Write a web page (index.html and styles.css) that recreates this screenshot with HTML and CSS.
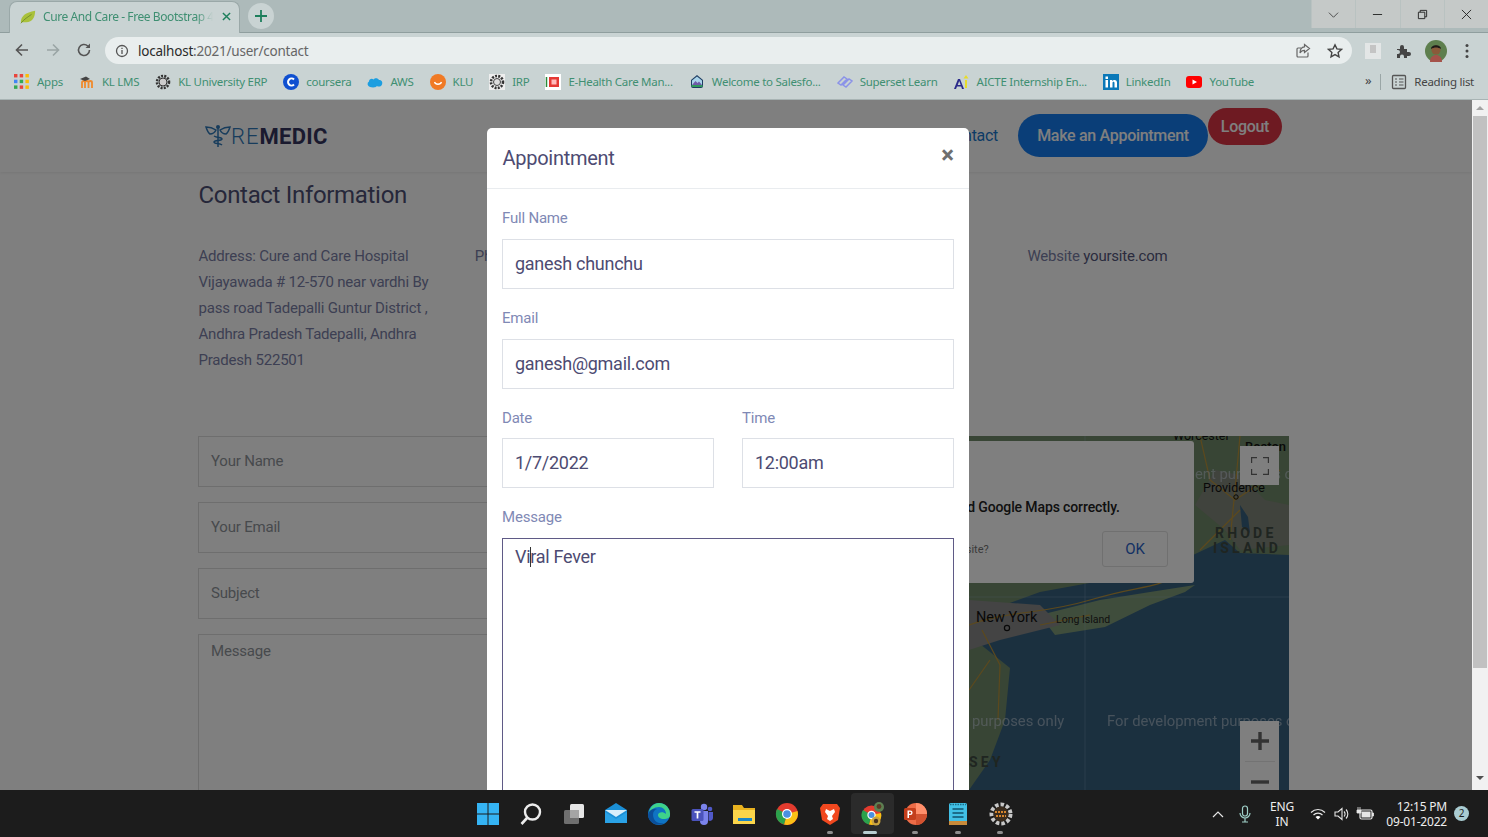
FILE: index.html
```html
<!DOCTYPE html>
<html lang="en">
<head>
<meta charset="utf-8">
<title>Cure And Care - Free Bootstrap 4</title>
<link rel="stylesheet" href="styles.css">
</head>
<body>
<div class="browser">
  <div class="tabstrip">
    <div class="tab">
      <svg class="ico16" viewBox="0 0 18 16"><path d="M1 14C1 7 6 3 17 1c0 7-3 13-10 13-2 0-4 0-6 0z" fill="#a9c13b"/><path d="M1 15C5 10 9 8 13 5" stroke="#6d8a2a" fill="none"/></svg>
      <span class="tab-title">Cure And Care - Free Bootstrap 4</span>
      <svg class="tab-x" viewBox="0 0 10 10"><path d="M1 1l8 8M9 1l-8 8" stroke="#1d7f5c" stroke-width="1.6"/></svg>
    </div>
    <div class="newtab"><svg viewBox="0 0 12 12"><path d="M6 0v12M0 6h12" stroke="#1d7f5c" stroke-width="1.8"/></svg></div>
    <div class="winctl">
      <span class="wc"><svg viewBox="0 0 12 12"><path d="M1 4l5 5 5-5" fill="none" stroke="#444"/></svg></span>
      <span class="wc"><svg viewBox="0 0 12 12"><path d="M1 6h10" stroke="#222"/></svg></span>
      <span class="wc"><svg viewBox="0 0 12 12"><path d="M1.5 3.5h7v7h-7zM3.5 3.5v-2h7v7h-2" fill="none" stroke="#222"/></svg></span>
      <span class="wc"><svg viewBox="0 0 12 12"><path d="M1 1l10 10M11 1L1 11" stroke="#222"/></svg></span>
    </div>
  </div>

  <div class="toolbar">
    <svg class="tb-ico" viewBox="0 0 16 16"><path d="M14 8H2.500M8 2.500L2.500 8 8 13.500" fill="none" stroke="#555" stroke-width="1.6"/></svg>
    <svg class="tb-ico" viewBox="0 0 16 16"><path d="M2 8h11.500M8 2.500L13.500 8 8 13.500" fill="none" stroke="#9aa5a5" stroke-width="1.6"/></svg>
    <svg class="tb-ico" viewBox="0 0 16 16"><path d="M13.500 8A5.500 5.500 0 1 1 11.800 4" fill="none" stroke="#555" stroke-width="1.600"/><path d="M14 1.500V6H9.500z" fill="#555"/></svg>
    <div class="omnibox">
      <svg class="ico14" viewBox="0 0 14 14"><circle cx="7" cy="7" r="5.500" fill="none" stroke="#555" stroke-width="1.300"/><path d="M7 6v4M7 3.800v1.300" stroke="#555" stroke-width="1.300"/></svg>
      <span class="url"><b>localhost</b>:2021/user/contact</span>
      <svg class="ico16 omni-share" viewBox="0 0 16 16"><path d="M13 9.500V13a1 1 0 0 1-1 1H3a1 1 0 0 1-1-1V6a1 1 0 0 1 1-1h3" fill="none" stroke="#666" stroke-width="1.200"/><path d="M9.500 1.500L14.500 5.500 9.500 9.500V7.300C7.500 7.300 6 8 5 10c0-4 2-6 4.500-6.200z" fill="none" stroke="#666" stroke-width="1.200"/></svg>
      <svg class="ico16 omni-star" viewBox="0 0 16 16"><path d="M8 1.800l1.900 4.100 4.500.5-3.300 3 .9 4.400L8 11.600l-4 2.200.9-4.400-3.300-3 4.500-.5z" fill="none" stroke="#444" stroke-width="1.400"/></svg>
    </div>
    <span class="ext-page"><i></i></span>
    <svg class="ext-puzzle" viewBox="0 0 16 16"><path d="M1 6h3V4a2 2 0 0 1 4 0v2h3v3h2a2 2 0 0 1 0 4h-2v2H8v-1.500a2 2 0 0 0-4 0V15H1v-4h1a2 2 0 0 0 0-4H1z" fill="#444"/></svg>
    <svg class="avatar" viewBox="0 0 22 22"><circle cx="11" cy="11" r="11" fill="#5e7f4e"/><path d="M5 22c0-5 3-7 6-7s6 2 6 7z" fill="#a5524a"/><circle cx="11" cy="10" r="4.500" fill="#8a5a3a"/><path d="M6 9c0-5 10-5 10 0-3-2-7-2-10 0z" fill="#1d1a17"/></svg>
    <svg class="kebab" viewBox="0 0 4 16"><circle cx="2" cy="2.500" r="1.500" fill="#444"/><circle cx="2" cy="8" r="1.500" fill="#444"/><circle cx="2" cy="13.500" r="1.500" fill="#444"/></svg>
  </div>

  <div class="bookmarks">
    <a class="bm"><svg class="ico16" viewBox="0 0 14 14"><g><rect x="0" y="0" width="3" height="3" fill="#e8453c"/><rect x="5" y="0" width="3" height="3" fill="#e8453c"/><rect x="10" y="0" width="3" height="3" fill="#fbbc05"/><rect x="0" y="5" width="3" height="3" fill="#4285f4"/><rect x="5" y="5" width="3" height="3" fill="#34a853"/><rect x="10" y="5" width="3" height="3" fill="#fbbc05"/><rect x="0" y="10" width="3" height="3" fill="#34a853"/><rect x="5" y="10" width="3" height="3" fill="#e8453c"/><rect x="10" y="10" width="3" height="3" fill="#fbbc05"/></g></svg>Apps</a>
    <a class="bm"><svg class="ico16" viewBox="0 0 16 16"><path d="M3 14V8.500c0-2 3-2 3 0V14M6 14V8.500c0-2 3.500-2 3.500 0V14M9.500 14V8.500c0-2 3.500-2 3.500 0V14" fill="none" stroke="#f08a2c" stroke-width="1.800"/><path d="M1 5l6-2.500L11 5 6 7z" fill="#444"/></svg>KL LMS</a>
    <a class="bm"><svg class="ico16" viewBox="0 0 16 16"><circle cx="8" cy="8" r="6" fill="none" stroke="#333" stroke-width="2.600" stroke-dasharray="2 1.200"/><circle cx="8" cy="8" r="4" fill="#ccc" stroke="#333"/></svg>KL University ERP</a>
    <a class="bm"><svg class="ico16" viewBox="0 0 16 16"><circle cx="8" cy="8" r="8" fill="#0f4fd0"/><path d="M11 5.500a3.500 3.500 0 1 0 0 5" fill="none" stroke="#fff" stroke-width="2"/></svg>coursera</a>
    <a class="bm"><svg class="ico16" viewBox="0 0 16 16"><path d="M3 13a3 3 0 0 1-1-5.500C2 5 5 4 6.500 5.500 8 3.500 11 4 12 6c2.500 0 4 2 3 4.500S11 13 10 12c-2 2-5 1.500-7 1z" fill="#1c9ee0"/></svg>AWS</a>
    <a class="bm"><svg class="ico16" viewBox="0 0 16 16"><circle cx="8" cy="8" r="8" fill="#f07a25"/><path d="M4.500 8c1 3 6 3 7 0" fill="none" stroke="#fff" stroke-width="1.300"/></svg>KLU</a>
    <a class="bm"><svg class="ico16" viewBox="0 0 16 16"><rect width="16" height="16" fill="#eee"/><circle cx="8" cy="8" r="6" fill="none" stroke="#333" stroke-width="2.600" stroke-dasharray="2 1.200"/><circle cx="8" cy="8" r="3.500" fill="#ddd" stroke="#444"/></svg>IRP</a>
    <a class="bm"><svg class="ico16" viewBox="0 0 16 16"><rect width="16" height="16" fill="#fff"/><rect x="4" y="3" width="10" height="10" fill="#e53935"/><rect x="6.500" y="5.500" width="5" height="5" fill="#fbb"/><path d="M1.500 3v10" stroke="#2a8a3a" stroke-width="1.500"/></svg>E-Health Care Man...</a>
    <a class="bm"><svg class="ico16" viewBox="0 0 16 16"><path d="M8 1l6 5v6a2 2 0 0 1-2 2H4a2 2 0 0 1-2-2V6z" fill="#1d3d62"/><path d="M8 2.500l5 4V11H3V6.500z" fill="#a9d3ea"/><path d="M3 11l3.500-4 2 2 1.500-1.500L13 11z" fill="#6f5aa8"/><path d="M2.500 11h11v2h-11z" fill="#2f9a5c"/></svg>Welcome to Salesfo...</a>
    <a class="bm"><svg class="ico16" viewBox="0 0 16 16"><path d="M1 9l6-6 3 2-6 6zM6 11l6-6 3 2-6 6z" fill="none" stroke="#8a92e8" stroke-width="1.500"/></svg>Superset Learn</a>
    <a class="bm"><svg class="ico16" viewBox="0 0 16 16"><path d="M0 15L4 5h2l4 10H8l-.8-2.500H3L2 15zM3.700 11h3L5.200 7z" fill="#2b2a8a"/><path d="M12 1l2.500 3.500h-5z" fill="#e8dc2a"/><path d="M11 6h2v8h-2z" fill="#e8dc2a"/></svg>AICTE Internship En...</a>
    <a class="bm"><svg class="ico16" viewBox="0 0 16 16"><rect width="16" height="16" fill="#0b78b8"/><rect x="2.500" y="6" width="2.500" height="7.500" fill="#fff"/><rect x="2.500" y="2.500" width="2.500" height="2.500" fill="#fff"/><path d="M7 6h2.300v1.200C10.500 5.300 14 5.500 14 8.500v5h-2.500V9c0-1.600-2-1.600-2 0v4.500H7z" fill="#fff"/></svg>LinkedIn</a>
    <a class="bm"><svg class="ico16" viewBox="0 0 16 16"><rect y="2" width="16" height="12" rx="3" fill="#f00"/><path d="M6.500 5.500L11 8l-4.500 2.500z" fill="#fff"/></svg>YouTube</a>
    <span class="bm-more">»</span>
    <span class="bm-divider"></span>
    <a class="bm bm-read"><svg class="ico16" viewBox="0 0 16 16"><rect x="1.500" y="1.500" width="13" height="13" rx="1" fill="none" stroke="#555" stroke-width="1.300"/><path d="M4 5h2M8 5h4.500M4 8h2M8 8h4.500M4 11h2M8 11h4.500" stroke="#555" stroke-width="1.200"/></svg>Reading list</a>
  </div>

  <div class="viewport">
    <div class="page">
      <header class="site-header">
        <div class="logo">
          <svg class="logo-mark" viewBox="0 0 26 24"><g fill="none" stroke="#2f79b8" stroke-width="1.500"><path d="M13 2v21"/><path d="M1 3c3 0 7 1 10 3-1 2-3 4-6 4C3 9 2 6 1 3zM25 3c-3 0-7 1-10 3 1 2 3 4 6 4 2-1 3-4 4-7z"/><path d="M9 12c3 2 8 1 8 3s-8 1-8 3 6 1 8 3"/></g><circle cx="13" cy="3" r="2" fill="#2f79b8"/></svg>
          <span class="logo-re">RE</span><span class="logo-medic">MEDIC</span>
        </div>
        <nav class="nav">
          <a class="nav-link">Contact</a>
          <a class="btn-appoint">Make an Appointment</a>
          <a class="btn-logout">Logout</a>
        </nav>
      </header>

      <main class="contact">
        <h2 class="contact-title">Contact Information</h2>
        <div class="info-grid">
          <p class="info-cell">Address: Cure and Care Hospital Vijayawada # 12-570 near vardhi By pass road Tadepalli Guntur District , Andhra Pradesh Tadepalli, Andhra Pradesh 522501</p>
          <p class="info-cell">Phone</p>
          <p class="info-cell"></p>
          <p class="info-cell">Website <span class="info-strong">yoursite.com</span></p>
        </div>
        <div class="form-map">
          <form class="contact-form">
            <div class="ph-field">Your Name</div>
            <div class="ph-field">Your Email</div>
            <div class="ph-field">Subject</div>
            <div class="ph-field ph-area">Message</div>
          </form>
          <div class="map">
            <svg class="map-art" viewBox="746 436 543 354">
              <rect x="746" y="436" width="543" height="354" fill="#36607f"/>
              <path d="M746 436H1289V555L1240 553 1225 540 1193 555 1150 572 1040 592 985 612 975 640 1010 668 1005 720 990 760 969 790H746z" fill="#718a6a"/>
              <path d="M1040 615L1100 600 1150 592 1195 585 1185 592 1150 605 1105 627 1055 635z" fill="#7f9a78"/>
              <path d="M969 600L1040 605 1060 625 1000 640 969 650z" fill="#888"/>
              <path d="M1195 505L1215 470 1240 475 1265 500 1289 505V545L1240 550 1225 530z" fill="#80867a"/>
              <path d="M1240 505l8 12 2 16-8-6z" fill="#36607f"/>
              <g fill="none" stroke="#b8923a" stroke-width="1.200">
                <path d="M969 625C1010 610 1040 615 1090 600S1150 590 1180 575"/>
                <path d="M982 630L1000 665 998 720M969 690L990 660M1040 625L1090 615"/>
                <path d="M1200 436L1210 480 1235 500 1280 470M1240 436L1236 480 1230 540M1200 550L1240 510"/>
              </g>
              <path d="M1085 436V790M746 597H1289" stroke="#9db7c9" stroke-width=".6" opacity=".5"/>
              <text x="1173" y="440" class="map-city">Worcester</text>
              <text x="1245" y="451" class="map-city map-city-b">Boston</text>
              <text x="1203" y="492" class="map-city">Providence</text>
              <circle cx="1236" cy="497" r="2.200" fill="none" stroke="#111" stroke-width="1"/>
              <text x="1215" y="538" class="map-state">RHODE</text>
              <text x="1213" y="553" class="map-state">ISLAND</text>
              <text x="976" y="622" class="map-city map-city-b map-ny">New York</text>
              <circle cx="1007" cy="628" r="2.600" fill="none" stroke="#111" stroke-width="1.200"/>
              <text x="1056" y="623" class="map-small">Long Island</text>
              <text x="969" y="767" class="map-state">SEY</text>
              <text x="972" y="726" class="map-dev">purposes only</text>
              <text x="1107" y="726" class="map-dev">For development purposes o</text>
              <text x="1195" y="479" class="map-dev">ent purposes o</text>
            </svg>
            <div class="map-dialog">
              <p class="map-dialog-text">This page can't load Google Maps correctly.</p>
              <div class="map-dialog-foot">
                <span class="map-dialog-q">Do you own this website?</span>
                <span class="map-ok">OK</span>
              </div>
            </div>
            <div class="map-fullscreen"><svg viewBox="0 0 18 18"><path d="M0 6V0h6M12 0h6v6M18 12v6h-6M6 18H0v-6" fill="none" stroke="#666" stroke-width="2.400"/></svg></div>
            <div class="map-zoom">
              <span class="map-zoom-btn"><svg viewBox="0 0 18 18"><path d="M9 0v18M0 9h18" stroke="#666" stroke-width="3.400"/></svg></span>
              <span class="map-zoom-sep"></span>
              <span class="map-zoom-btn"><svg viewBox="0 0 18 18"><path d="M0 9h18" stroke="#666" stroke-width="3.400"/></svg></span>
            </div>
          </div>
        </div>
      </main>

      <div class="backdrop"></div>
      <section class="modal">
        <div class="modal-head">
          <h3 class="modal-title">Appointment</h3>
          <span class="modal-close">×</span>
        </div>
        <div class="modal-body">
          <div class="group">
            <div class="label">Full Name</div>
            <div class="control">ganesh chunchu</div>
          </div>
          <div class="group">
            <div class="label">Email</div>
            <div class="control">ganesh@gmail.com</div>
          </div>
          <div class="group-row">
            <div class="group">
              <div class="label label-tight">Date</div>
              <div class="control">1/7/2022</div>
            </div>
            <div class="group">
              <div class="label label-tight">Time</div>
              <div class="control">12:00am</div>
            </div>
          </div>
          <div class="group">
            <div class="label">Message</div>
            <div class="control control-area">Vi<span class="caret"></span>ral Fever</div>
          </div>
        </div>
      </section>
    </div>
    <div class="scrollbar">
      <svg class="sb-arrow" viewBox="0 0 10 6"><path d="M5 1l4 4H1z" fill="#a3a3a3"/></svg>
      <div class="sb-thumb"></div>
      <svg class="sb-arrow" viewBox="0 0 10 6"><path d="M5 5L1 1h8z" fill="#505050"/></svg>
    </div>
  </div>

  <footer class="taskbar">
    <div class="tb-apps">
      <span class="app"><svg viewBox="0 0 24 24"><path d="M1 1h10.500v10.500H1zM12.500 1H23v10.500H12.500zM1 12.500h10.500V23H1zM12.500 12.500H23V23H12.500z" fill="#35b4f4"/></svg></span>
      <span class="app"><svg viewBox="0 0 24 24"><circle cx="13.500" cy="10" r="7.500" fill="none" stroke="#ececec" stroke-width="2.400"/><path d="M8 16l-5.500 6" stroke="#ececec" stroke-width="2.600"/></svg></span>
      <span class="app"><svg viewBox="0 0 24 24"><rect x="8" y="2" width="14" height="14" rx="1.500" fill="#e6e6e6"/><rect x="2" y="8" width="15" height="14" rx="1.500" fill="#6f6f6f"/><rect x="8" y="8" width="9" height="8" fill="#a5a5a5"/></svg></span>
      <span class="app"><svg viewBox="0 0 24 24"><path d="M1 8L12 1l11 7v13H1z" fill="#1b8fd6"/><path d="M1 8h22L12 15z" fill="#d8eefb"/><path d="M1 10l11 7 11-7v11H1z" fill="#2aa2e6"/></svg></span>
      <span class="app"><svg viewBox="0 0 24 24"><circle cx="12" cy="12" r="11" fill="#0f74c4"/><path d="M12 1a11 11 0 0 1 11 12c0 3-3 4-6 4-4 0-6-2-6-4 0-3 5-4 8-1 0-4-3-7-7-7-5 0-9 3-10 7 0-6 4-11 10-11z" fill="#3fd28a"/><path d="M1 14c0-5 4-8 9-7-4 1-5 6-3 10s6 5 10 4c-6 4-15 0-16-7z" fill="#0b4f9a"/></svg></span>
      <span class="app"><svg viewBox="0 0 24 24"><circle cx="14" cy="5" r="3.200" fill="#7b83eb"/><circle cx="20" cy="7" r="2.300" fill="#5059c9"/><path d="M10 9h8v10a4 4 0 0 1-8 0z" fill="#7b83eb"/><path d="M18.500 10H23v6a3 3 0 0 1-4.500 2.500z" fill="#5059c9"/><rect x="1.500" y="7" width="12" height="12" rx="1.500" fill="#4b53bc"/><path d="M4.500 10h6M7.500 10v6.500" stroke="#fff" stroke-width="1.700"/></svg></span>
      <span class="app"><svg viewBox="0 0 24 24"><path d="M1 3h9l2 3h11v16H1z" fill="#e8b21f"/><path d="M1 8h22v14H1z" fill="#fbd54a"/><rect x="6" y="16" width="14" height="3" fill="#1a86c8"/></svg></span>
      <span class="app"><svg viewBox="0 0 24 24"><circle cx="12" cy="12" r="11" fill="#e33b2e"/><path d="M12 12L22.500 9A11 11 0 0 1 9 22.500z" fill="#fbc116"/><path d="M12 12L9 22.500A11 11 0 0 1 2 7z" fill="#2ba24c"/><circle cx="12" cy="12" r="5" fill="#fff"/><circle cx="12" cy="12" r="3.800" fill="#4a90e2"/></svg></span>
      <span class="app app-dot"><svg viewBox="0 0 24 24"><path d="M5 2h14l3 4-2 12-8 5-8-5L2 6z" fill="#f1481f"/><path d="M8 7l4 2 4-2 1 3-3 4 1 3-3 2-3-2 1-3-3-4z" fill="#fff"/></svg></span>
      <span class="app app-active"><svg viewBox="0 0 24 24"><circle cx="10.500" cy="13" r="9.500" fill="#e33b2e"/><path d="M10.500 13L20 11A9.500 9.500 0 0 1 8 22.500z" fill="#fbc116"/><path d="M10.500 13L8 22.500A9.500 9.500 0 0 1 2 8z" fill="#2ba24c"/><circle cx="10.500" cy="13" r="4.200" fill="#fff"/><circle cx="10.500" cy="13" r="3" fill="#4a90e2"/><circle cx="18" cy="5" r="5" fill="#5d7f52"/><circle cx="18" cy="4.500" r="2.400" fill="#5a3b27"/><circle cx="15" cy="19" r="4.500" fill="#c9a33f"/><circle cx="15" cy="19" r="2.200" fill="#46301f"/></svg></span>
      <span class="app app-dot"><svg viewBox="0 0 24 24"><circle cx="13" cy="12" r="11" fill="#ed6c47"/><path d="M13 1a11 11 0 0 1 11 11H13z" fill="#ff8f6b"/><path d="M13 12h11a11 11 0 0 1-11 11z" fill="#d35230"/><rect x="1" y="6" width="12" height="12" rx="1.500" fill="#c43e1c"/><path d="M4.500 16V8.500h2.800a2.300 2.300 0 0 1 0 4.600H6V16zM6 11.800h1.200a1 1 0 0 0 0-2H6z" fill="#fff"/></svg></span>
      <span class="app app-dot"><svg viewBox="0 0 24 24"><rect x="3" y="1" width="18" height="22" rx="1.500" fill="#41c0e6"/><path d="M3 19h18v4H3z" fill="#c88a3a"/><path d="M6.500 7h11M6.500 11h11M6.500 15h11" stroke="#10516e" stroke-width="1.600"/><path d="M4 2.500h16" stroke="#1c6f8c" stroke-width="1.500" stroke-dasharray="1.500 1"/></svg></span>
      <span class="app app-dot"><svg viewBox="0 0 24 24"><circle cx="12" cy="12" r="9.500" fill="none" stroke="#c8c8c8" stroke-width="4" stroke-dasharray="3.500 2"/><circle cx="12" cy="12" r="7.500" fill="#3a2c1e"/><path d="M6 10h12M7 14h10" stroke="#d6852c" stroke-width="2" stroke-dasharray="2 1"/></svg></span>
    </div>
    <div class="tray">
      <svg class="tray-chev" viewBox="0 0 12 8"><path d="M1 7l5-5 5 5" fill="none" stroke="#e6e6e6" stroke-width="1.200"/></svg>
      <svg class="tray-mic" viewBox="0 0 12 18"><rect x="3.500" y="1" width="5" height="10" rx="2.500" fill="none" stroke="#9fd0c8" stroke-width="1.200"/><path d="M1 8a5 5 0 0 0 10 0M6 13v4M3 17h6" fill="none" stroke="#9fd0c8" stroke-width="1.200"/></svg>
      <div class="tray-lang"><span>ENG</span><span>IN</span></div>
      <svg class="tray-wifi" viewBox="0 0 16 12"><path d="M1 4.500c4-4 10-4 14 0M3.500 7c2.500-2.500 6.500-2.500 9 0" fill="none" stroke="#e6e6e6" stroke-width="1.200"/><path d="M5.500 9c1.500-1.500 3.500-1.500 5 0L8 11.500z" fill="#fff"/></svg>
      <svg class="tray-vol" viewBox="0 0 16 14"><path d="M1 5h3l4-3.500v11L4 9H1z" fill="none" stroke="#e6e6e6" stroke-width="1.100"/><path d="M10 4.500a3.500 3.500 0 0 1 0 5M12 2.500a6.500 6.500 0 0 1 0 9" fill="none" stroke="#e6e6e6" stroke-width="1.100"/></svg>
      <svg class="tray-bat" viewBox="0 0 18 14"><rect x="4" y="3" width="12" height="9" rx="1.500" fill="none" stroke="#e6e6e6" stroke-width="1.200"/><rect x="5.500" y="4.500" width="9" height="6" fill="#e6e6e6"/><path d="M16 6h1.500v3H16M1 3h4v3H1zM2 0v3M4 0v3" fill="#e6e6e6" stroke="#e6e6e6" stroke-width=".8"/></svg>
      <div class="tray-clock"><span>12:15 PM</span><span>09-01-2022</span></div>
      <span class="tray-badge">2</span>
    </div>
  </footer>
</div>
</body>
</html>
```

FILE: styles.css
```css
* { box-sizing: border-box; }
html, body { margin: 0; padding: 0; height: 100%; overflow: hidden; }
body { font-family: Roboto, "Liberation Sans", sans-serif; background: #1c1c1c; }
svg { display: block; flex: none; }
p, h2, h3 { margin: 0; font-weight: 400; }

.browser { width: 1488px; height: 837px; display: flex; flex-direction: column; overflow: hidden; }
.ico16 { width: 16px; height: 16px; }
.ico14 { width: 14px; height: 14px; }

/* tab strip */
.tabstrip { height: 33px; background: #adbaba; display: flex; align-items: flex-end; padding-left: 9px; border-bottom: 1px solid #8f9e9e; flex: none; }
.tab { width: 231px; height: 32px; margin-bottom: -1px; padding: 0 8px 2px 10px; background: #c9d3d3; border-radius: 8px 8px 0 0; border: 1px solid #9aa8a8; border-bottom: 0; display: flex; align-items: center; font: 12px/16px "Noto Sans", sans-serif; letter-spacing: -.42px; color: #3f8f72; }
.tab-title { margin-left: 7px; width: 170px; white-space: nowrap; overflow: hidden; -webkit-mask-image: linear-gradient(90deg, #000 90%, transparent); mask-image: linear-gradient(90deg, #000 90%, transparent); }
.tab-x { width: 9px; height: 9px; margin-left: 9px; }
.newtab { width: 26px; height: 26px; margin: 0 0 3px 8px; border-radius: 50%; background: #c9d3d3; display: flex; align-items: center; justify-content: center; }
.newtab svg { width: 12px; height: 12px; }
.winctl { margin-left: auto; align-self: flex-start; height: 28px; display: flex; background: #c5c9c8; }
.wc { width: 44.25px; display: flex; align-items: center; justify-content: center; background: #c5c9c8; border-left: 1px solid #b9c2c1; }
.wc svg { width: 11px; height: 11px; }

/* toolbar */
.toolbar { height: 33px; background: #c9d3d3; display: flex; align-items: center; padding-left: 14px; flex: none; }
.tb-ico { width: 16px; height: 16px; margin-right: 15px; }
.omnibox { width: 1247px; height: 27px; margin-left: -2px; margin-top: 2px; border-radius: 14px; background: #e9eeee; display: flex; align-items: center; padding-left: 10px; }
.url { margin-left: 9px; font: 13.5px "Noto Sans", sans-serif; letter-spacing: -.22px; color: #666; }
.url b { font-weight: 400; color: #2b2b2b; }
.omni-share { margin-left: auto; }
.omni-star { margin: 0 9px 0 16px; }
.ext-page { width: 16px; height: 16px; margin-left: 13px; margin-top: 2px; background: #e3e6e6; display: block; padding: 2px 0 0 5px; }
.ext-page i { display: block; width: 6px; height: 8px; background: #c4c4c4; }
.ext-puzzle { width: 16px; height: 16px; margin-left: 15px; margin-top: 2px; }
.avatar { width: 22px; height: 22px; margin-left: 13px; margin-top: 2px; }
.kebab { width: 4px; height: 16px; margin-left: 18px; margin-top: 2px; }

/* bookmarks */
.bookmarks { height: 34px; padding: 0 0 2px 14px; background: #c9d3d3; display: flex; align-items: center; font: 11.5px "Noto Sans", sans-serif; letter-spacing: -.27px; color: #3f8f72; border-bottom: 1px solid #a8b4b4; flex: none; }
.bm { display: flex; align-items: center; gap: 7px; margin-right: 16px; white-space: nowrap; }
.bm-more { margin: 0 0 3px auto; color: #444; font-size: 13px; }
.bm-divider { width: 1px; height: 16px; background: #9aa6a6; margin: 0 10px 0 9px; }
.bm-read { margin-right: 14px; color: #444; }

/* viewport */
.viewport { flex: 1; min-height: 0; display: flex; overflow: hidden; }
.page { position: relative; width: 1472px; overflow: hidden; background: #fff; }
.scrollbar { width: 16px; background: #f1f1f1; display: flex; flex-direction: column; align-items: center; padding-top: 5px; }
.sb-arrow { width: 10px; height: 6px; }
.sb-thumb { width: 14px; height: 552px; margin: 5px 0 107px; background: #c1c1c1; }

/* site header */
.site-header { height: 72px; display: flex; align-items: flex-start; padding-left: 205px; box-shadow: 0 1px 3px rgba(0,0,0,.08); }
.logo { display: flex; align-items: center; height: 24px; margin-top: 24px; font-size: 22px; }
.logo-mark { width: 26px; height: 24px; }
.logo-re { color: #2f79b8; font-weight: 300; letter-spacing: 1px; }
.logo-medic { color: #35355e; font-weight: 700; letter-spacing: .3px; }
.nav { margin-left: auto; display: flex; align-items: flex-start; font-size: 16px; letter-spacing: -.3px; margin-right: 190px; }
.nav-link { margin: 26px 20px 0 0; color: #1977cc; }
.btn-appoint { margin-top: 14px; width: 190px; height: 43px; border-radius: 22px; background: #157cf0; color: #fff; font-weight: 500; display: flex; align-items: center; justify-content: center; }
.btn-logout { margin-top: 8px; width: 74px; height: 37px; border-radius: 19px; background: #dc3545; color: #fff; font-weight: 500; display: flex; align-items: center; justify-content: center; }

/* contact section */
.contact { padding: 9px 183px 0 198.5px; }
.contact-title { font-size: 24px; line-height: 29px; letter-spacing: -.32px; color: #4d4f74; }
.info-grid { margin-top: 33px; width: 1110px; display: grid; grid-template-columns: repeat(4, 276.3px); font-size: 15px; line-height: 26px; letter-spacing: -.2px; color: #7a7ea6; height: 167px; }
.info-cell { padding-right: 44px; }
.info-strong { color: #55577c; }

.form-map { margin-top: 26px; margin-left: -.5px; display: grid; grid-template-columns: 533px 543px; column-gap: 15px; }
.contact-form { display: flex; flex-direction: column; gap: 15px; }
.ph-field { height: 51px; border: 1px solid #ddd; padding: 0 12px 1px; display: flex; align-items: center; font-size: 15px; letter-spacing: -.2px; color: #8f949a; }
.ph-area { height: 240px; align-items: flex-start; padding-top: 7px; }
.map { position: relative; height: 354px; overflow: hidden; }
.map-art { width: 543px; height: 354px; }
.map-city { font: 12.5px Roboto, sans-serif; fill: #111; }
.map-city-b { font-size: 13px; font-weight: 500; }
.map-ny { font-size: 14.500px; font-weight: 400; }
.map-small { font: 10.500px Roboto, sans-serif; fill: #222; }
.map-state { font: 700 14px Roboto, sans-serif; letter-spacing: 3.200px; fill: #3f4a42; }
.map-dev { font: 14.800px Roboto, sans-serif; fill: #c4cfda; opacity: .62; }
.map-dialog { position: absolute; left: 94px; top: 5px; width: 354px; height: 142px; background: #fff; border-radius: 3px; padding: 57px 26px 0 13px; }
.map-dialog-text { font-size: 14px; font-weight: 500; letter-spacing: -.12px; color: #222; line-height: 18px; white-space: nowrap; }
.map-dialog-foot { display: flex; justify-content: space-between; align-items: center; margin: 15px 0 0 12px; }
.map-dialog-q { font-size: 11px; color: #757575; }
.map-ok { width: 66px; height: 36px; border: 1px solid #e0e0e0; border-radius: 3px; color: #2a63c8; font-size: 15px; display: flex; align-items: center; justify-content: center; }
.map-fullscreen { position: absolute; right: 10px; top: 10px; width: 39px; height: 39px; background: #fff; display: flex; align-items: center; justify-content: center; }
.map-fullscreen svg { width: 18px; height: 18px; }
.map-zoom { position: absolute; right: 10px; top: 285px; width: 39px; height: 81px; background: #fff; display: flex; flex-direction: column; align-items: center; }
.map-zoom-btn { height: 40px; display: flex; align-items: center; justify-content: center; }
.map-zoom-btn svg { width: 18px; height: 18px; }
.map-zoom-sep { width: 30px; height: 1px; background: #e6e6e6; }

/* modal */
.backdrop { position: absolute; inset: 0; background: rgba(0,0,0,.5); }
.modal { position: absolute; left: 487px; top: 28px; width: 482px; height: 800px; background: #fff; border-radius: 5px 5px 0 0; }
.modal-head { height: 61px; border-bottom: 1px solid #e9ecef; display: flex; justify-content: space-between; padding: 15px 15px 0 15.5px; }
.modal-title { font-size: 20px; line-height: 30px; letter-spacing: -.27px; color: #4d4b72; }
.modal-close { font-size: 24px; font-weight: 700; color: #6e6e6e; line-height: 24px; }
.modal-body { padding: 17px 15px 0; }
.group { margin-bottom: 17px; }
.group-row { display: grid; grid-template-columns: 212px 212px; column-gap: 28px; }
.label { height: 22px; margin-bottom: 11px; font-size: 15px; line-height: 24px; letter-spacing: -.2px; color: #7f89b5; }
.label-tight { margin-bottom: 10px; }
.control { height: 50px; border: 1px solid #dde0e6; padding: 0 12px; font-size: 18px; line-height: 48px; letter-spacing: -.28px; color: #4d4b72; }
.control-area { height: 400px; border-color: #5f5a86; line-height: 36px; }
.caret { display: inline-block; width: 1px; height: 20px; margin-right: -1px; background: #333; vertical-align: -4px; }

/* taskbar */
.taskbar { height: 47px; background: #1c1c1c; display: flex; align-items: center; padding-left: 467px; flex: none; }
.tb-apps { display: flex; }
.app { position: relative; width: 42.7px; height: 41px; display: flex; align-items: center; justify-content: center; }
.app svg { width: 24px; height: 24px; }
.app-dot::after { content: ""; position: absolute; bottom: 0; left: 18px; width: 6px; height: 3px; border-radius: 2px; background: #8d8d8d; }
.app-active { background: #2b2b2b; border-radius: 4px; }
.app-active::after { content: ""; position: absolute; bottom: 0; left: 12px; width: 14px; height: 3px; border-radius: 2px; background: #b8cdd0; }
.tray { margin-left: auto; display: flex; align-items: center; color: #eee; font: 12px "Noto Sans", sans-serif; letter-spacing: -.2px; padding-right: 19px; }
.tray-chev { width: 12px; height: 8px; margin-right: 15px; }
.tray-mic { width: 12px; height: 18px; margin-right: 13px; }
.tray-lang { display: flex; flex-direction: column; align-items: center; line-height: 15px; width: 36px; margin-right: 10px; }
.tray-wifi { width: 16px; height: 12px; margin-right: 8px; }
.tray-vol { width: 16px; height: 14px; margin-right: 6px; }
.tray-bat { width: 18px; height: 14px; margin-right: 11px; }
.tray-clock { display: flex; flex-direction: column; align-items: flex-end; line-height: 15px; width: 62px; white-space: nowrap; }
.tray-badge { width: 15px; height: 15px; margin-left: 7px; border-radius: 50%; background: #a9ccd2; color: #1c1c1c; font-size: 10px; line-height: 15px; text-align: center; }
```
